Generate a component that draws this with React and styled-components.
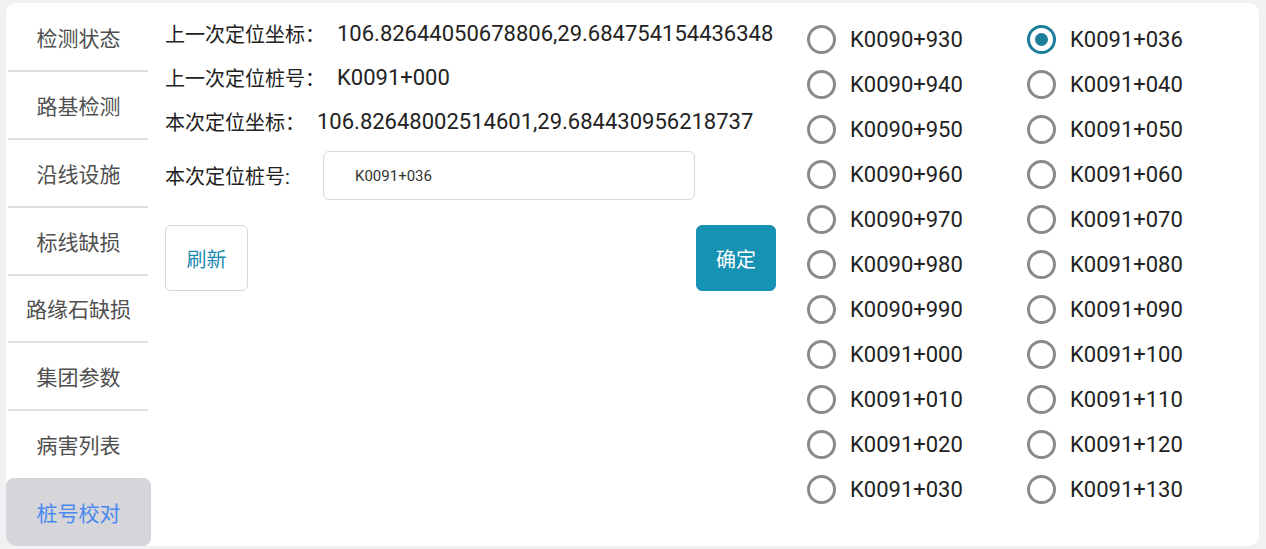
import React, { useState } from "react";
import styled, { createGlobalStyle } from "styled-components";

const GlobalStyle = createGlobalStyle`
  html, body {
    margin: 0;
    padding: 0;
    background: #f1f1f3;
    font-family: Roboto, "Noto Sans CJK SC", sans-serif;
  }
`

const Card = styled.div`
  margin: 3px 7px 0 6px;
  height: 543px;
  background: #fff;
  border-radius: 10px;
  display: flex;
  overflow: hidden;
`

const Sidebar = styled.div`
  width: 145px;
  flex-shrink: 0;
  display: flex;
  flex-direction: column;
`

const NavItem = styled.div`
  position: relative;
  height: 68px;
  display: flex;
  align-items: center;
  justify-content: center;
  font-size: 21px;
  color: ${p => (p.active ? "#4a88f0" : "#505050")};
  background: ${p => (p.active ? "#d5d5da" : "transparent")};
  border-radius: ${p => (p.active ? "8px" : "0")};

  &:after {
    content: "";
    display: ${p => (p.last || p.active ? "none" : "block")};
    position: absolute;
    left: 2px;
    right: 3px;
    bottom: -1px;
    height: 2px;
    background: #e0e0e0;
  }
`

const Main = styled.div`
  flex: 1;
  display: flex;
  padding-left: 14px;
`

const Form = styled.div`
  width: 611px;
  padding-top: 8px;
  display: flex;
  flex-direction: column;
`

const InfoLine = styled.div`
  height: 44px;
  display: flex;
  align-items: center;
  font-size: 20px;
  color: #222;
  white-space: nowrap;
  text-spacing-trim: space-all;
`

const Value = styled.span`
  margin-left: ${p => p.gap || 0}px;
  font-size: 22px;
  font-family: Roboto, sans-serif;
`

const InputRow = styled.div`
  margin-top: 8px;
  display: flex;
  align-items: center;
  font-size: 20px;
  color: #222;
`

const Label = styled.span`
  width: 158px;
`

const Input = styled.input`
  width: 372px;
  height: 49px;
  box-sizing: border-box;
  border: 1px solid #d8d8d8;
  border-radius: 6px;
  padding-left: 31px;
  font-size: 15px;
  font-family: Roboto, sans-serif;
  color: #333;
  outline: none;
`

const Buttons = styled.div`
  margin-top: 25px;
  display: flex;
  justify-content: space-between;
`

const Button = styled.button`
  width: ${p => p.w}px;
  height: 66px;
  border-radius: 6px;
  font-size: 20px;
  font-family: "Noto Sans CJK SC", sans-serif;
  border: 1px solid ${p => (p.primary ? "#1692b3" : "#d6d6d6")};
  background: ${p => (p.primary ? "#1692b3" : "#fff")};
  color: ${p => (p.primary ? "#fff" : "#1a8bb0")};
  padding: 0;
`

const RadioGrid = styled.div`
  margin-left: 31px;
  padding-top: 14px;
  display: grid;
  grid-template-columns: 220px 220px;
  grid-auto-flow: column;
  grid-template-rows: repeat(11, 45px);
`

const RadioItem = styled.label`
  display: flex;
  align-items: center;
  gap: 14px;
  font-size: 22px;
  color: #222;
  cursor: pointer;
`

const Circle = styled.span`
  width: 29px;
  height: 29px;
  box-sizing: border-box;
  border-radius: 50%;
  border: 3px solid ${p => (p.checked ? "#1b7d9a" : "#8a8a8a")};
  display: flex;
  align-items: center;
  justify-content: center;

  &:after {
    content: "";
    display: ${p => (p.checked ? "block" : "none")};
    width: 13px;
    height: 13px;
    border-radius: 50%;
    background: #1b7d9a;
  }
`

const navs = ["检测状态", "路基检测", "沿线设施", "标线缺损", "路缘石缺损", "集团参数", "病害列表", "桩号校对"]

const stakes = [
  "K0090+930", "K0090+940", "K0090+950", "K0090+960", "K0090+970", "K0090+980",
  "K0090+990", "K0091+000", "K0091+010", "K0091+020", "K0091+030",
  "K0091+036", "K0091+040", "K0091+050", "K0091+060", "K0091+070", "K0091+080",
  "K0091+090", "K0091+100", "K0091+110", "K0091+120", "K0091+130",
]

const App = () => {
  const [selected, setSelected] = useState("K0091+036")

  return (
    <>
      <GlobalStyle />
      <Card>
        <Sidebar>
          {navs.map((n, i) => (
            <NavItem key={n} active={i === navs.length - 1} last={i === navs.length - 2}>{n}</NavItem>
          ))}
        </Sidebar>
        <Main>
          <Form>
            <InfoLine>上一次定位坐标：<Value gap={12}>106.82644050678806,29.684754154436348</Value></InfoLine>
            <InfoLine>上一次定位桩号：<Value gap={12}>K0091+000</Value></InfoLine>
            <InfoLine>本次定位坐标：<Value gap={12}>106.82648002514601,29.684430956218737</Value></InfoLine>
            <InputRow>
              <Label>本次定位桩号:</Label>
              <Input value={selected} readOnly />
            </InputRow>
            <Buttons>
              <Button w={83}>刷新</Button>
              <Button w={80} primary>确定</Button>
            </Buttons>
          </Form>
          <RadioGrid>
            {stakes.map(s => (
              <RadioItem key={s} onClick={() => setSelected(s)}>
                <Circle checked={s === selected} />
                {s}
              </RadioItem>
            ))}
          </RadioGrid>
        </Main>
      </Card>
    </>
  )
}

export default App
